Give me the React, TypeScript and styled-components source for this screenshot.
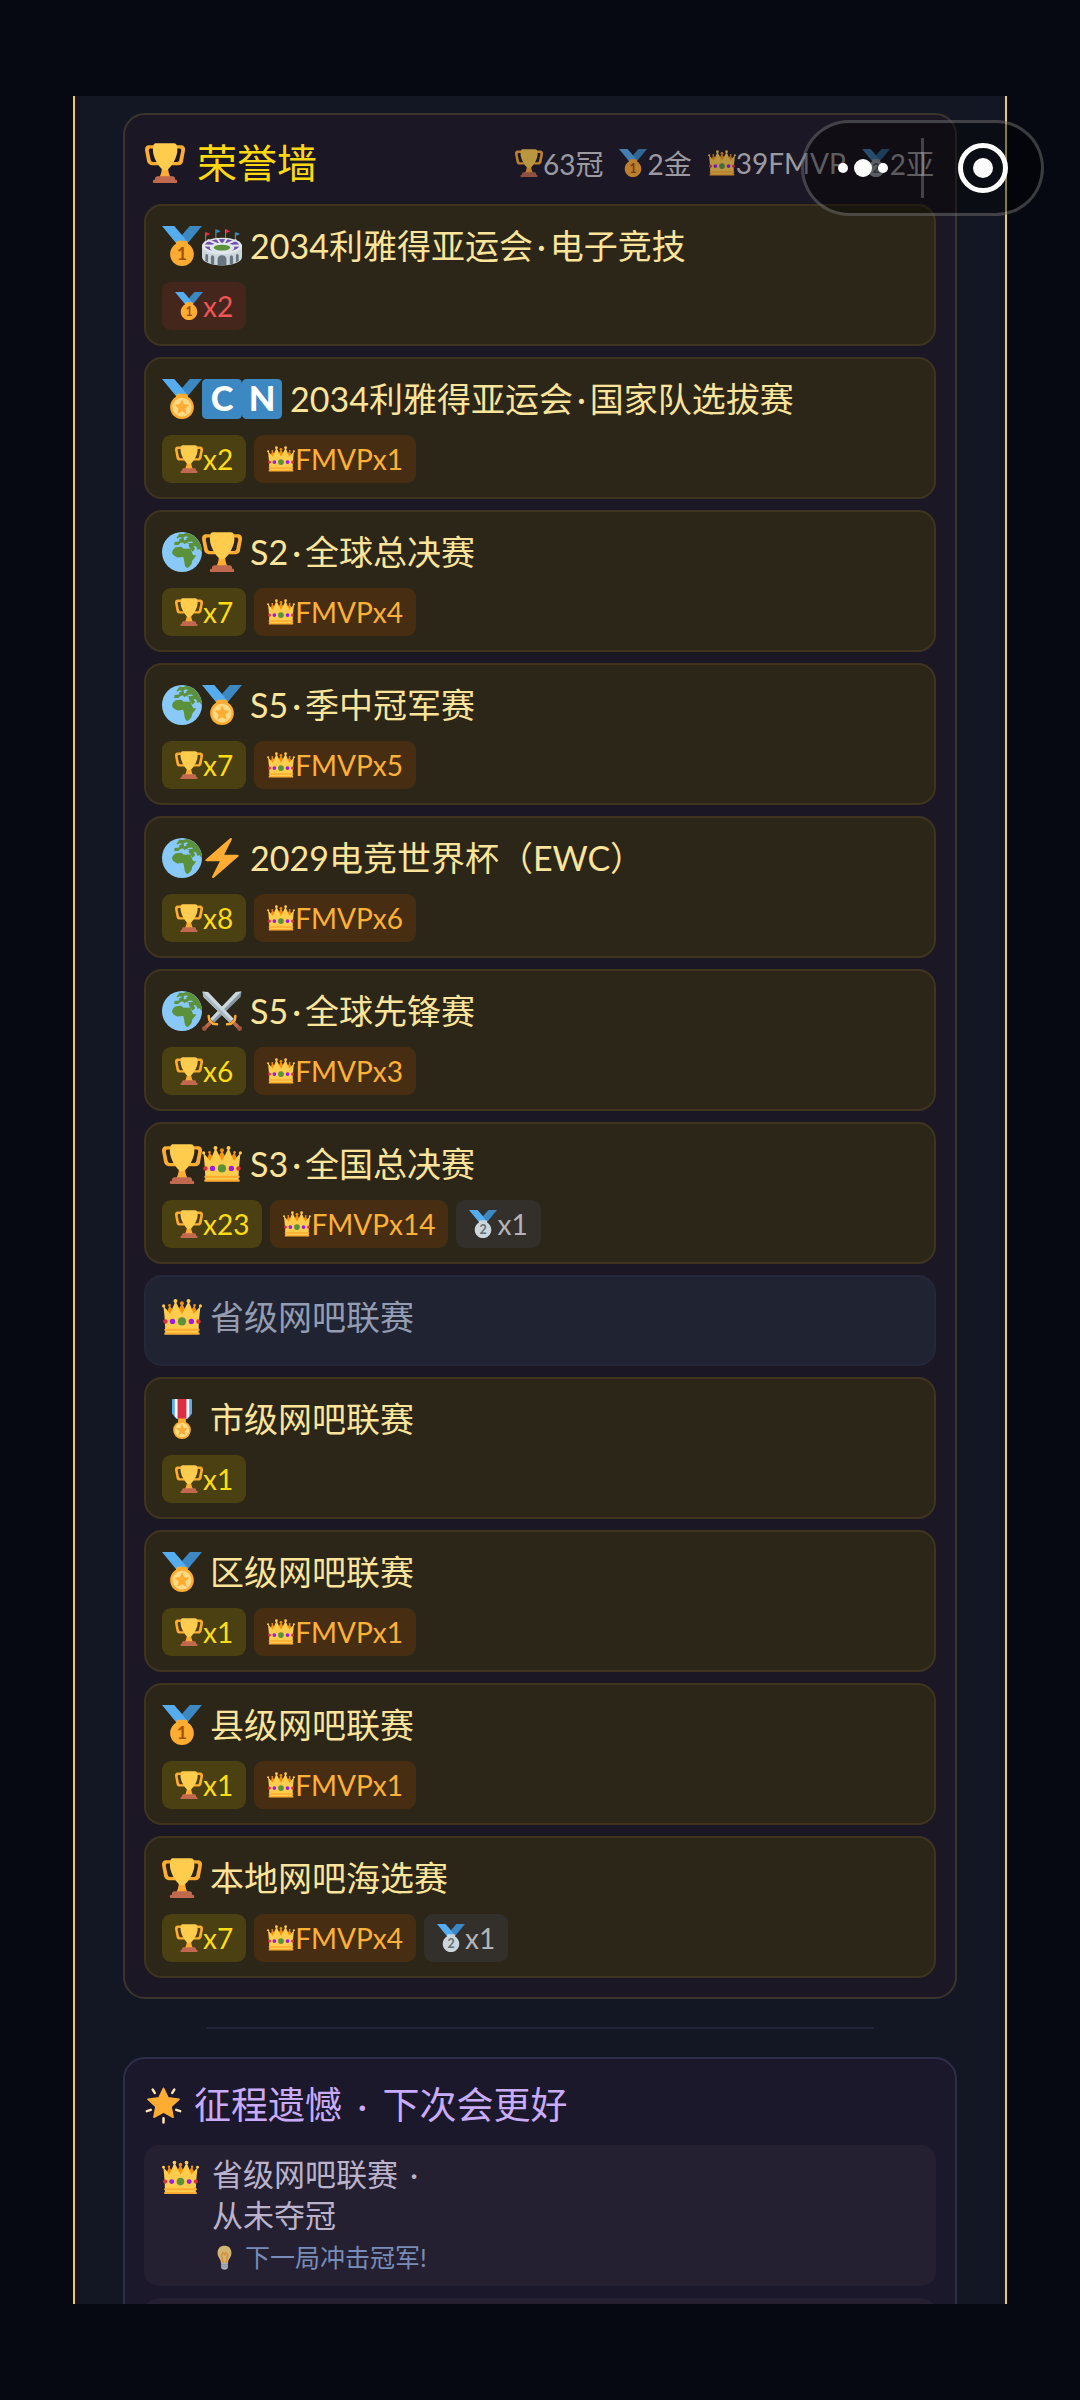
import React from 'react'
import styled, { createGlobalStyle, css } from 'styled-components'

type EmojiName =
  | 'trophy'
  | 'gold'
  | 'silver'
  | 'medal'
  | 'military'
  | 'crown'
  | 'stadium'
  | 'letterC'
  | 'letterN'
  | 'globe'
  | 'bolt'
  | 'swords'
  | 'star'
  | 'bulb'

type ChipTone = 'gold' | 'orange' | 'red' | 'silver'

type ChipData = { tone: ChipTone; icon: EmojiName; text: string }

type Honor = {
  icons: EmojiName[]
  title: string[]
  chips: ChipData[]
}

const cup = (n: number): ChipData => ({ tone: 'gold', icon: 'trophy', text: `x${n}` })
const fmvp = (n: number): ChipData => ({ tone: 'orange', icon: 'crown', text: `FMVPx${n}` })
const second = (n: number): ChipData => ({ tone: 'silver', icon: 'silver', text: `x${n}` })

const honors: Honor[] = [
  { icons: ['gold', 'stadium'], title: ['2034利雅得亚运会', '电子竞技'], chips: [{ tone: 'red', icon: 'gold', text: 'x2' }] },
  { icons: ['medal', 'letterC', 'letterN'], title: ['2034利雅得亚运会', '国家队选拔赛'], chips: [cup(2), fmvp(1)] },
  { icons: ['globe', 'trophy'], title: ['S2', '全球总决赛'], chips: [cup(7), fmvp(4)] },
  { icons: ['globe', 'medal'], title: ['S5', '季中冠军赛'], chips: [cup(7), fmvp(5)] },
  { icons: ['globe', 'bolt'], title: ['2029电竞世界杯（EWC）'], chips: [cup(8), fmvp(6)] },
  { icons: ['globe', 'swords'], title: ['S5', '全球先锋赛'], chips: [cup(6), fmvp(3)] },
  { icons: ['trophy', 'crown'], title: ['S3', '全国总决赛'], chips: [cup(23), fmvp(14), second(1)] },
  { icons: ['crown'], title: ['省级网吧联赛'], chips: [] },
  { icons: ['military'], title: ['市级网吧联赛'], chips: [cup(1)] },
  { icons: ['medal'], title: ['区级网吧联赛'], chips: [cup(1), fmvp(1)] },
  { icons: ['gold'], title: ['县级网吧联赛'], chips: [cup(1), fmvp(1)] },
  { icons: ['trophy'], title: ['本地网吧海选赛'], chips: [cup(7), fmvp(4), second(1)] },
]

const stats: { icon: EmojiName; text: string }[] = [
  { icon: 'trophy', text: '63冠' },
  { icon: 'gold', text: '2金' },
  { icon: 'crown', text: '39FMVP' },
  { icon: 'silver', text: '2亚' },
]

const ribbon = (
  <>
    <path fill="#55ACEE" d="M18 8l-7-8H0l14 17 11.521-4.75z" />
    <path fill="#3B88C3" d="M25 0l-7 8 5.39 7.312 1.227-1.489L36 0z" />
  </>
)

const medalDisc =
  'M23.205 16.026c.08-.217.131-.448.131-.693 0-1.104-.896-2-2-2h-6.667c-1.105 0-2 .896-2 2 0 .245.05.476.131.693-3.258 1.826-5.464 5.307-5.464 9.307C7.335 31.224 12.111 36 18.002 36s10.667-4.776 10.667-10.667c0-4-2.206-7.481-5.464-9.307z'

const drawings: Record<EmojiName, React.ReactNode> = {
  trophy: (
    <>
      <path
        fill="#FFAC33"
        d="M5.123 5h6C12.227 5 13 4.896 13 6V4c0-1.104-.773-2-1.877-2h-8c-2 0-3.583 2.125-3 5 0 0 1.791 9.375 1.917 9.958C2.373 18.5 4.164 20 6.081 20h6.958c1.105 0-.039-1.896-.039-3v-2c0 1.104-.773 2-1.877 2h-4c-1.104 0-1.833-1.042-2-2S3.539 7.667 3.539 7.667C3.206 5.75 4.018 5 5.123 5zm25.812 0h-6C23.831 5 22 4.896 22 6V4c0-1.104 1.831-2 2.935-2h8c2 0 3.584 2.125 3 5 0 0-1.633 9.419-1.771 10-.354 1.5-2.042 3-4 3h-7.146C21.914 20 22 18.104 22 17v-2c0 1.104 1.831 2 2.935 2h4c1.104 0 1.834-1.042 2-2s1.584-7.333 1.584-7.333C32.851 5.75 32.04 5 30.935 5zM20.832 22c0-6.958-2.709 0-2.709 0s-3-6.958-3 0-3.291 10-3.291 10h12.292c-.001 0-3.292-3.042-3.292-10z"
      />
      <path
        fill="#FFCC4D"
        d="M29.123 6.577c0 6.775-6.77 18.192-11 18.192-4.231 0-11-11.417-11-18.192 0-5.195 1-6.319 3-6.319 1.374 0 6.025-.027 8-.027l7-.001c2.917-.001 4 .684 4 6.347z"
      />
      <path
        fill="#C1694F"
        d="M27 33c0 1.104.227 2-.877 2h-16C9.018 35 9 34.104 9 33v-1c0-1.104 1.164-2 2.206-2h13.917c1.042 0 1.877.896 1.877 2v1z"
      />
      <path
        fill="#C1694F"
        d="M29 34.625c0 .76.165 1.375-1.252 1.375H8.498C7.206 36 7 35.385 7 34.625v-.25C7 33.615 7.738 33 8.498 33h19.25c.759 0 1.252.615 1.252 1.375v.25z"
      />
    </>
  ),
  gold: (
    <>
      {ribbon}
      <path fill="#FFAC33" d={medalDisc} />
      <text x="18" y="31" textAnchor="middle" fontSize="16" fontWeight="700" fill="#9E5200">1</text>
    </>
  ),
  silver: (
    <>
      {ribbon}
      <path fill="#CCD6DD" d={medalDisc} />
      <text x="18" y="31" textAnchor="middle" fontSize="16" fontWeight="700" fill="#627077">2</text>
    </>
  ),
  medal: (
    <>
      {ribbon}
      <path fill="#FFAC33" d={medalDisc} />
      <circle cx="18" cy="25.3" r="8.5" fill="#FFD983" />
      <path
        fill="#FFAC33"
        d="M18 18.2l1.9 4.6 4.9.4-3.7 3.3 1.1 4.9-4.2-2.6-4.2 2.6 1.1-4.9-3.7-3.3 4.9-.4z"
      />
    </>
  ),
  military: (
    <>
      <path fill="#55ACEE" d="M9 1c0-.6.4-1 1-1h16c.6 0 1 .4 1 1v12l-4 5H13l-4-5z" />
      <path fill="#fff" d="M11.5 0h13v15.5L22 18h-8l-2.5-2.5z" />
      <path fill="#DD2E44" d="M14 0h8v18h-8z" />
      <path fill="#FFAC33" d="M14.5 17.5h7v5h-7z" />
      <circle cx="18" cy="28" r="8" fill="#FFAC33" />
      <circle cx="18" cy="28" r="6.5" fill="#FFD983" />
      <path
        fill="#FFAC33"
        d="M18 22.5l1.5 3.6 3.9.3-3 2.6.9 3.8-3.3-2-3.3 2 .9-3.8-3-2.6 3.9-.3z"
      />
    </>
  ),
  crown: (
    <>
      <path fill="#F4900C" d="M14.174 17.075L6.75 7.594l-3.722 9.481zM17.938 5.534l-6.563 12.389H24.5zM21.826 17.075l7.424-9.481 3.722 9.481z" />
      <path
        fill="#FFCC4D"
        d="M28.669 15.19L23.887 3.523l-5.88 11.668-.007.003-.007-.004-5.88-11.668L7.331 15.19C4.197 10.833 1.28 8.042 1.28 8.042S3 20.75 3 33h30c0-12.25 1.72-24.958 1.72-24.958s-2.917 2.791-6.051 7.148z"
      />
      <circle fill="#5C913B" cx="17.957" cy="22" r="3.688" />
      <circle fill="#981CEB" cx="26.463" cy="22" r="2.412" />
      <circle fill="#DD2E44" cx="32.852" cy="22" r="1.986" />
      <circle fill="#981CEB" cx="9.45" cy="22" r="2.412" />
      <circle fill="#DD2E44" cx="3.061" cy="22" r="1.986" />
      <path
        fill="#FFAC33"
        d="M33 34H3c-.552 0-1-.447-1-1s.448-1 1-1h30c.553 0 1 .447 1 1s-.447 1-1 1zm0-3.486H3c-.552 0-1-.447-1-1s.448-1 1-1h30c.553 0 1 .447 1 1s-.447 1-1 1z"
      />
      <circle fill="#FFCC4D" cx="1.447" cy="8.042" r="1.407" />
      <circle fill="#F4900C" cx="6.75" cy="7.594" r="1.192" />
      <circle fill="#FFCC4D" cx="12.113" cy="3.523" r="1.784" />
      <circle fill="#FFCC4D" cx="34.553" cy="8.042" r="1.407" />
      <circle fill="#F4900C" cx="29.25" cy="7.594" r="1.192" />
      <circle fill="#FFCC4D" cx="23.887" cy="3.523" r="1.784" />
      <circle fill="#F4900C" cx="17.938" cy="5.534" r="1.784" />
    </>
  ),
  stadium: (
    <>
      <path stroke="#99AAB5" strokeWidth="0.7" d="M3.3 6v10M12.5 3v9M21.2 3v9M30 6v10" />
      <path fill="#DD2E44" d="M3.5 5.5l4 1.7-4 1.8zM21.5 3l4 1.8-4 1.7z" />
      <path fill="#3B88C3" d="M12.8 3l4 1.8-4 1.7zM30.3 5.5l4 1.7-4 1.8z" />
      <path fill="#CCD6DD" d="M0 17h36v11c0 4.5-8 7.5-18 7.5S0 32.5 0 28z" />
      <ellipse cx="18" cy="18" rx="18" ry="7.5" fill="#E1E8ED" />
      <ellipse cx="18" cy="17.5" rx="15.5" ry="5.8" fill="#744EAA" />
      <path stroke="#E1E8ED" strokeWidth="1.8" d="M18 18L13.5 11M18 18l4.5-7M18 18L5 12.5M18 18l13-5.5M18 18L2 17.5M18 18l16-.5" />
      <ellipse cx="18" cy="19.5" rx="11" ry="4.5" fill="#E1E8ED" />
      <ellipse cx="18" cy="19.5" rx="7.5" ry="2.6" fill="#5C913B" />
      <path fill="#66757F" d="M14 35v-5c0-5 8-5 8 0v5c-2.5.4-5.5.4-8 0zM8 34v-5.5c0-3 3-3 3 0v6zM25 34.5v-6c0-3 3-3 3 0V34zM3 31.5V27c0-2.5 2.5-2 2.5 0v5.8zM30.5 32.8V27c0-2 2.5-2.5 2.5 0v4.5z" />
    </>
  ),
  letterC: (
    <>
      <rect width="36" height="36" rx="4" fill="#3B88C3" />
      <text x="18" y="28.5" textAnchor="middle" fontSize="31" fontWeight="900" fill="#fff">C</text>
    </>
  ),
  letterN: (
    <>
      <rect width="36" height="36" rx="4" fill="#3B88C3" />
      <text x="18" y="28.5" textAnchor="middle" fontSize="31" fontWeight="900" fill="#fff">N</text>
    </>
  ),
  globe: (
    <>
      <circle cx="18" cy="18" r="18" fill="#88C9F9" />
      <path
        fill="#5C913B"
        d="M12.5 13.8l5-.5 1.500 1.500 3 .2 3.500-.2c1 1.800 1.500 4.200 2.500 5.800 1 .6 2 .2 2.700 0-.5 2.400-3.200 3.800-3.700 5.800l-.3 2.200c-.9 1.200-2.200 3.300-4 3.900-1.700-.6-2.400-3.200-2.600-5 .1-1.800-.7-3.500-.7-4.600-1.600-1.300-4.200.5-6-.2-3-1-4.500-2.900-4.300-4.600.3-2 1.900-3.400 3.400-4.300z"
      />
      <path
        fill="#5C913B"
        d="M15.5 1.500l4 .3 2.500-1.200C28 2 33 6.500 35 12.500c.8 2.500 1 4 .9 6l-2.200-3.300-1.700 1-1.200-3.200-2.500-.3 1.500 2.500-2.300 2.500-3.500-5.200.3-2-2.800-.5-1.500 1-1-1.600-2 .3-2.500 2.100-3.500-.1.300-2.800 4.300-.4-.3-1.700 3-1.300-2.500-.7-1.800 1-1-.8 1.500-1.700z"
      />
      <path fill="#88C9F9" d="M19.500 4.500l3-.7.8 1.200-2 1 1 .8-2.500.8zM22.500 9l4.500-.4 1 1-4 .6z" />
    </>
  ),
  bolt: (
    <path
      fill="#FFAC33"
      d="M32.938 15.651C32.792 15.26 32.418 15 32 15H19.925L26.89 1.458c.219-.426.106-.947-.271-1.243C26.437.071 26.218 0 26 0c-.233 0-.466.082-.653.243L18 6.588 3.347 19.243c-.316.273-.43.714-.284 1.105S3.582 21 4 21h12.075L9.11 34.542c-.219.426-.106.947.271 1.243.182.144.401.215.619.215.233 0 .466-.082.653-.243L18 29.412l14.653-12.655c.317-.273.43-.714.285-1.106z"
    />
  ),
  swords: (
    <>
      <path fill="#8899A6" d="M35.5.5l-.8 5L11 28.5 7.5 25 30.5 1z" />
      <path fill="#CCD6DD" d="M35.5.5L9.3 26.800 7.500 25 30.500 1z" />
      <path stroke="#BF6952" strokeWidth="3.2" d="M8 28l-6 6" />
      <path stroke="#FFAC33" strokeWidth="2.2" strokeLinecap="round" d="M6 22.500l.5 3.500 3.500 3.500 3.500.5" fill="none" />
      <circle cx="2.200" cy="33.800" r="2.200" fill="#A0553E" />
      <path fill="#CCD6DD" d="M.5.5l.8 5L25 28.500l3.500-3.500L5.500 1z" />
      <path fill="#A9B8C3" d="M.5.5l.8 5L25 28.500l1.700-1.700z" />
      <path stroke="#BF6952" strokeWidth="3.2" d="M28 28l6 6" />
      <path stroke="#FFAC33" strokeWidth="2.2" strokeLinecap="round" d="M30 22.500l-.5 3.500-3.500 3.500-3.500.5" fill="none" />
      <circle cx="33.800" cy="33.800" r="2.200" fill="#A0553E" />
    </>
  ),
  star: (
    <>
      <path
        fill="#FFAC33"
        stroke="#FFAC33"
        strokeWidth="1.6"
        strokeLinejoin="round"
        d="M18 1.2l4.4 9.3 10.8 1.4-7.9 7.2 2 10.300-9.300-5-9.300 5 2-10.300-7.900-7.200 10.800-1.400z"
      />
      <g stroke="#FFE8B6" strokeWidth="2.4" strokeLinecap="round">
        <path d="M7.5 2.5l2 3.2M28.5 2.5l-2 3.2M1.8 23.5l3.8-1.3M34.2 23.5l-3.8-1.3M18 30.5v4" />
      </g>
    </>
  ),
  bulb: (
    <>
      <path fill="#FFD983" d="M28 11.5c0 6.500-5 8.500-5 14.500H13c0-6-5-8-5-14.500C8 4.600 12 1 18 1s10 3.600 10 10.500z" />
      <path fill="none" stroke="#FFAC33" strokeWidth="2" d="M16 26l-2.500-12 2.500-3 2 3 2-3 2.500 3L20 26" />
      <path fill="#CCD6DD" d="M13 26h10v5.500c0 2-2 4-5 4s-5-2-5-4z" />
      <path stroke="#99AAB5" strokeWidth="1.3" d="M13 28.500h10M13 31.500h10" />
    </>
  ),
}

const Emoji = ({ name, size }: { name: EmojiName; size: number }) => (
  <EmojiSvg viewBox="0 0 36 36" width={size} height={size} aria-hidden="true">
    {drawings[name]}
  </EmojiSvg>
)

const HonorRow = React.memo<{ honor: Honor }>(function HonorRow({ honor }) {
  const won = honor.chips.length > 0

  return (
    <HonorItem $won={won}>
      <HonorTitle $won={won}>
        <IconGroup>
          {honor.icons.map((icon) => (
            <Emoji key={icon} name={icon} size={40} />
          ))}
        </IconGroup>
        <span>
          {honor.title[0]}
          {honor.title[1] && <Dot>·</Dot>}
          {honor.title[1]}
        </span>
      </HonorTitle>
      {won && (
        <ChipList>
          {honor.chips.map((chip) => (
            <Chip key={chip.text} $tone={chip.tone}>
              <Emoji name={chip.icon} size={28} />
              {chip.text}
            </Chip>
          ))}
        </ChipList>
      )}
    </HonorItem>
  )
})

export default function App() {
  return (
    <>
      <GlobalStyle />
      <Screen>
        <Modal>
          <Panel>
            <PanelHeader>
              <PanelTitle>
                <Emoji name="trophy" size={40} />
                荣誉墙
              </PanelTitle>
              <Stats>
                {stats.map((stat) => (
                  <Stat key={stat.text}>
                    <Emoji name={stat.icon} size={28} />
                    {stat.text}
                  </Stat>
                ))}
              </Stats>
            </PanelHeader>
            <HonorList>
              {honors.map((honor) => (
                <HonorRow key={honor.title.join()} honor={honor} />
              ))}
            </HonorList>
          </Panel>
          <Divider />
          <RegretPanel>
            <RegretTitle>
              <Emoji name="star" size={37} />
              <span>
                征程遗憾 <Dot $wide>·</Dot> 下次会更好
              </span>
            </RegretTitle>
            <RegretList>
              <RegretCard>
                <RegretIcon>
                  <Emoji name="crown" size={37} />
                </RegretIcon>
                <div>
                  <RegretLine>
                    省级网吧联赛 <Dot>·</Dot>
                  </RegretLine>
                  <RegretLine>从未夺冠</RegretLine>
                  <Hint>
                    <Emoji name="bulb" size={25} />
                    下一局冲击冠军!
                  </Hint>
                </div>
              </RegretCard>
              <RegretCard />
            </RegretList>
          </RegretPanel>
        </Modal>
        <Capsule>
          <CapsuleButton type="button" aria-label="更多">
            <svg width="50" height="20" viewBox="0 0 50 20" fill="#fff">
              <circle cx="5" cy="10" r="5" />
              <circle cx="25" cy="10" r="9" />
              <circle cx="45" cy="10" r="5" />
            </svg>
          </CapsuleButton>
          <CapsuleLine />
          <CapsuleButton type="button" aria-label="关闭">
            <svg width="50" height="50" viewBox="0 0 50 50">
              <circle cx="25" cy="25" r="22.5" fill="none" stroke="#fff" strokeWidth="5" />
              <circle cx="25" cy="25" r="10" fill="#fff" />
            </svg>
          </CapsuleButton>
        </Capsule>
      </Screen>
    </>
  )
}

const GlobalStyle = createGlobalStyle`
  * {
    box-sizing: border-box;
  }

  body {
    margin: 0;
    background: #060911;
    font-family: Lato, 'Noto Sans CJK SC', sans-serif;
  }

  h2, h3, p, ul {
    margin: 0;
    padding: 0;
    font-weight: 400;
    list-style: none;
  }
`

const Screen = styled.main`
  position: relative;
  height: 100vh;
  padding: 96px 73px;
`

const Modal = styled.section`
  height: 100%;
  padding: 17px 48px 0;
  overflow: hidden;
  background: #131623;
  border: solid #e9cb5c;
  border-width: 0 2px;
`

const Panel = styled.section`
  padding: 19px;
  background: #1b1724;
  border: 2px solid #3a352d;
  border-radius: 22px;
`

const PanelHeader = styled.header`
  display: flex;
  align-items: center;
  justify-content: space-between;
  height: 58px;
  margin-bottom: 12px;
  padding: 0 2px 0 1px;
`

const PanelTitle = styled.h2`
  display: flex;
  align-items: center;
  gap: 12px;
  font-size: 40px;
  line-height: 58px;
  color: #ffd90f;
  white-space: nowrap;
`

const Stats = styled.ul`
  display: flex;
  gap: 16px;
  font-size: 28px;
  color: #d2d2d6;
  opacity: 0.7;
`

const Stat = styled.li`
  display: flex;
  align-items: center;
  white-space: nowrap;
`

const HonorList = styled.ul`
  display: flex;
  flex-direction: column;
  gap: 11px;
`

const HonorItem = styled.li<{ $won: boolean }>`
  padding: 14px 16px;
  background: ${({ $won }) => ($won ? '#2b2617' : '#202331')};
  border: 2px solid ${({ $won }) => ($won ? '#3f3420' : '#242739')};
  border-radius: 18px;
`

const HonorTitle = styled.h3<{ $won: boolean }>`
  display: flex;
  align-items: center;
  gap: 8px;
  margin-bottom: ${({ $won }) => ($won ? '11px' : '8px')};
  font-size: 34px;
  line-height: 51px;
  color: ${({ $won }) => ($won ? '#fde49b' : '#949cb2')};
`

const IconGroup = styled.span`
  display: flex;
`

const EmojiSvg = styled.svg`
  display: block;
  flex-shrink: 0;
`

const Dot = styled.span<{ $wide?: boolean }>`
  margin: 0 ${({ $wide }) => ($wide ? '6px' : '4px')};
`

const ChipList = styled.div`
  display: flex;
  gap: 8px;
`

const tones = {
  gold: css`
    color: #ffdc14;
    background: #4a4012;
  `,
  orange: css`
    color: #ffb137;
    background: #472e12;
  `,
  red: css`
    color: #f25555;
    background: #45261c;
  `,
  silver: css`
    color: #b4b4b6;
    background: #33302b;
  `,
}

const Chip = styled.span<{ $tone: ChipTone }>`
  display: flex;
  align-items: center;
  height: 48px;
  padding: 0 13px;
  font-size: 28px;
  border-radius: 9px;
  ${({ $tone }) => tones[$tone]}
`

const Divider = styled.hr`
  width: 80%;
  height: 2px;
  margin: 28px auto;
  background: #212436;
  border: none;
`

const RegretPanel = styled(Panel)`
  background: #1c182b;
  border-color: #302d49;
`

const RegretTitle = styled.h2`
  display: flex;
  align-items: center;
  gap: 12px;
  margin-bottom: 13px;
  padding-left: 1px;
  font-size: 37px;
  line-height: 54px;
  color: #c9abfb;
`

const RegretList = styled.div`
  display: flex;
  flex-direction: column;
  gap: 12px;
`

const RegretCard = styled.article`
  display: flex;
  gap: 13px;
  min-height: 141px;
  padding: 9px 18px;
  background: #242031;
  border-radius: 15px;
`

const RegretIcon = styled.div`
  padding-top: 5px;
`

const RegretLine = styled.p`
  font-size: 31px;
  line-height: 41px;
  color: #bbb2cb;
`

const Hint = styled.p`
  display: flex;
  align-items: center;
  gap: 8px;
  margin-top: 3px;
  font-size: 25px;
  line-height: 36px;
  color: #8ea8da;
  opacity: 0.8;
`

const Capsule = styled.div`
  position: absolute;
  top: 120px;
  right: 36px;
  display: flex;
  align-items: center;
  width: 243px;
  height: 96px;
  background: rgba(0, 0, 0, 0.4);
  border: 3px solid rgba(255, 255, 255, 0.22);
  border-radius: 48px;
`

const CapsuleButton = styled.button`
  display: flex;
  flex: 1;
  align-items: center;
  justify-content: center;
  height: 100%;
  padding: 0;
  background: none;
  border: none;
  cursor: pointer;
`

const CapsuleLine = styled.span`
  width: 3px;
  height: 60px;
  background: rgba(255, 255, 255, 0.22);
`
